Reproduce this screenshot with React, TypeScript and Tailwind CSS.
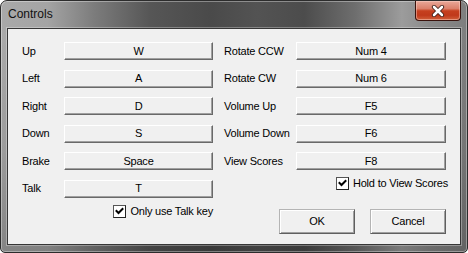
import React from "react";

function KeyBtn({ label, wide }: { label: string; wide?: boolean }) {
  return (
    <div
      className={
        (wide ? "w-[150px]" : "w-[149px]") +
        " h-[18px] bg-[#f0f0f0] border border-t-white border-l-white border-b-[#696969] border-r-[#696969] shadow-[inset_-1px_-1px_0_#a0a0a0] flex items-center justify-center text-[11px] leading-none text-black"
      }
    >
      {label}
    </div>
  );
}

function Row({ label, keyName, right }: { label: string; keyName: string; right?: boolean }) {
  return (
    <div className="flex items-center h-[18px]">
      <span className={(right ? "w-[72px]" : "w-[42px]") + " text-[11px] leading-none text-black"}>{label}</span>
      <KeyBtn label={keyName} wide={right} />
    </div>
  );
}

function Check() {
  return (
    <span className="w-[13px] h-[13px] border border-t-[#555] border-l-[#555] border-b-[#222] border-r-[#222] bg-white flex items-center justify-center shrink-0">
      <svg width="9" height="9" viewBox="0 0 9 9">
        <polyline points="1.5,4 3.5,6 7.5,2" fill="none" stroke="#000" strokeWidth="2" strokeLinecap="square" />
      </svg>
    </span>
  );
}

function DlgBtn({ label }: { label: string }) {
  return (
    <div className="w-[76px] h-[25px] bg-[#f0f0f0] border border-t-[#b4b4b4] border-l-[#b4b4b4] border-b-[#5f5f5f] border-r-[#5f5f5f] shadow-[inset_1px_1px_0_#ffffff,inset_-1px_-1px_0_#a0a0a0] flex items-center justify-center text-[11px] leading-none text-black">
      {label}
    </div>
  );
}

export default function App() {
  return (
    <div className="w-[468px] h-[253px] overflow-hidden font-['Liberation_Sans',Arial,sans-serif] tracking-[-0.2px]">
      <div className="w-[468px] h-[253px] flex flex-col rounded-t-[7px] rounded-b-[5px] border border-[#2c2c2c] shadow-[inset_0_0_0_1px_rgba(255,255,255,0.35)] [background-image:linear-gradient(180deg,rgba(0,0,0,0)_0%,rgba(0,0,0,0)_15%,rgba(0,0,0,0.08)_60%,rgba(0,0,0,0.22)_100%),linear-gradient(90deg,#a9a9a9_0%,#a4a4a4_10%,#7c7c7c_20%,#565656_32%,#4a4a4a_45%,#535353_55%,#4c4c4c_65%,#6e6e6e_76%,#9c9c9c_86%,#8a8a8a_92%,#7e7e7e_100%)]">
        <div className="h-[27px] flex items-start justify-between pl-[7px] shrink-0">
          <span className="mt-[6px] text-[12px] leading-[14px] text-[#111] tracking-normal">Controls</span>
          <div className="mr-[6px] w-[46px] h-[20px] rounded-b-[4px] border border-t-0 border-[#3a120c] shadow-[inset_0_0_0_1px_rgba(255,220,210,0.45)] bg-[linear-gradient(180deg,#e9a899_0%,#db806b_40%,#c6401f_52%,#c0391b_75%,#d1603a_100%)] flex items-center justify-center">
            <svg width="14" height="12" viewBox="0 0 14 12">
              <path d="M3 2 L11 10 M11 2 L3 10" stroke="#3a1a14" strokeWidth="4.2" strokeLinecap="round" fill="none" />
              <path d="M3 2 L11 10 M11 2 L3 10" stroke="#ffffff" strokeWidth="2.6" strokeLinecap="round" fill="none" />
            </svg>
          </div>
        </div>
        <div className="mx-[6px] mb-[7px] flex-1 border border-[#363636] shadow-[0_0_0_1px_rgba(255,255,255,0.3)] bg-[#f0f0f0] pt-[13px] pl-[14px] pr-[14px] flex gap-[11px]">
          <div className="w-[191px] flex flex-col">
            <div className="flex flex-col gap-[9.5px]">
              <Row label="Up" keyName="W" />
              <Row label="Left" keyName="A" />
              <Row label="Right" keyName="D" />
              <Row label="Down" keyName="S" />
              <Row label="Brake" keyName="Space" />
              <Row label="Talk" keyName="T" />
            </div>
            <div className="mt-[7.5px] flex items-center justify-end gap-[4px] h-[13px]">
              <Check />
              <span className="text-[11px] leading-none text-black">Only use Talk key</span>
            </div>
          </div>
          <div className="w-[222px] flex flex-col">
            <div className="flex flex-col gap-[9.5px]">
              <Row right label="Rotate CCW" keyName="Num 4" />
              <Row right label="Rotate CW" keyName="Num 6" />
              <Row right label="Volume Up" keyName="F5" />
              <Row right label="Volume Down" keyName="F6" />
              <Row right label="View Scores" keyName="F8" />
            </div>
            <div className="mt-[7px] mr-[-2px] flex items-center justify-end gap-[4px] h-[13px]">
              <Check />
              <span className="text-[11px] leading-none text-black">Hold to View Scores</span>
            </div>
            <div className="mt-[19px] flex justify-end gap-[15px]">
              <DlgBtn label="OK" />
              <DlgBtn label="Cancel" />
            </div>
          </div>
        </div>
      </div>
    </div>
  );
}
